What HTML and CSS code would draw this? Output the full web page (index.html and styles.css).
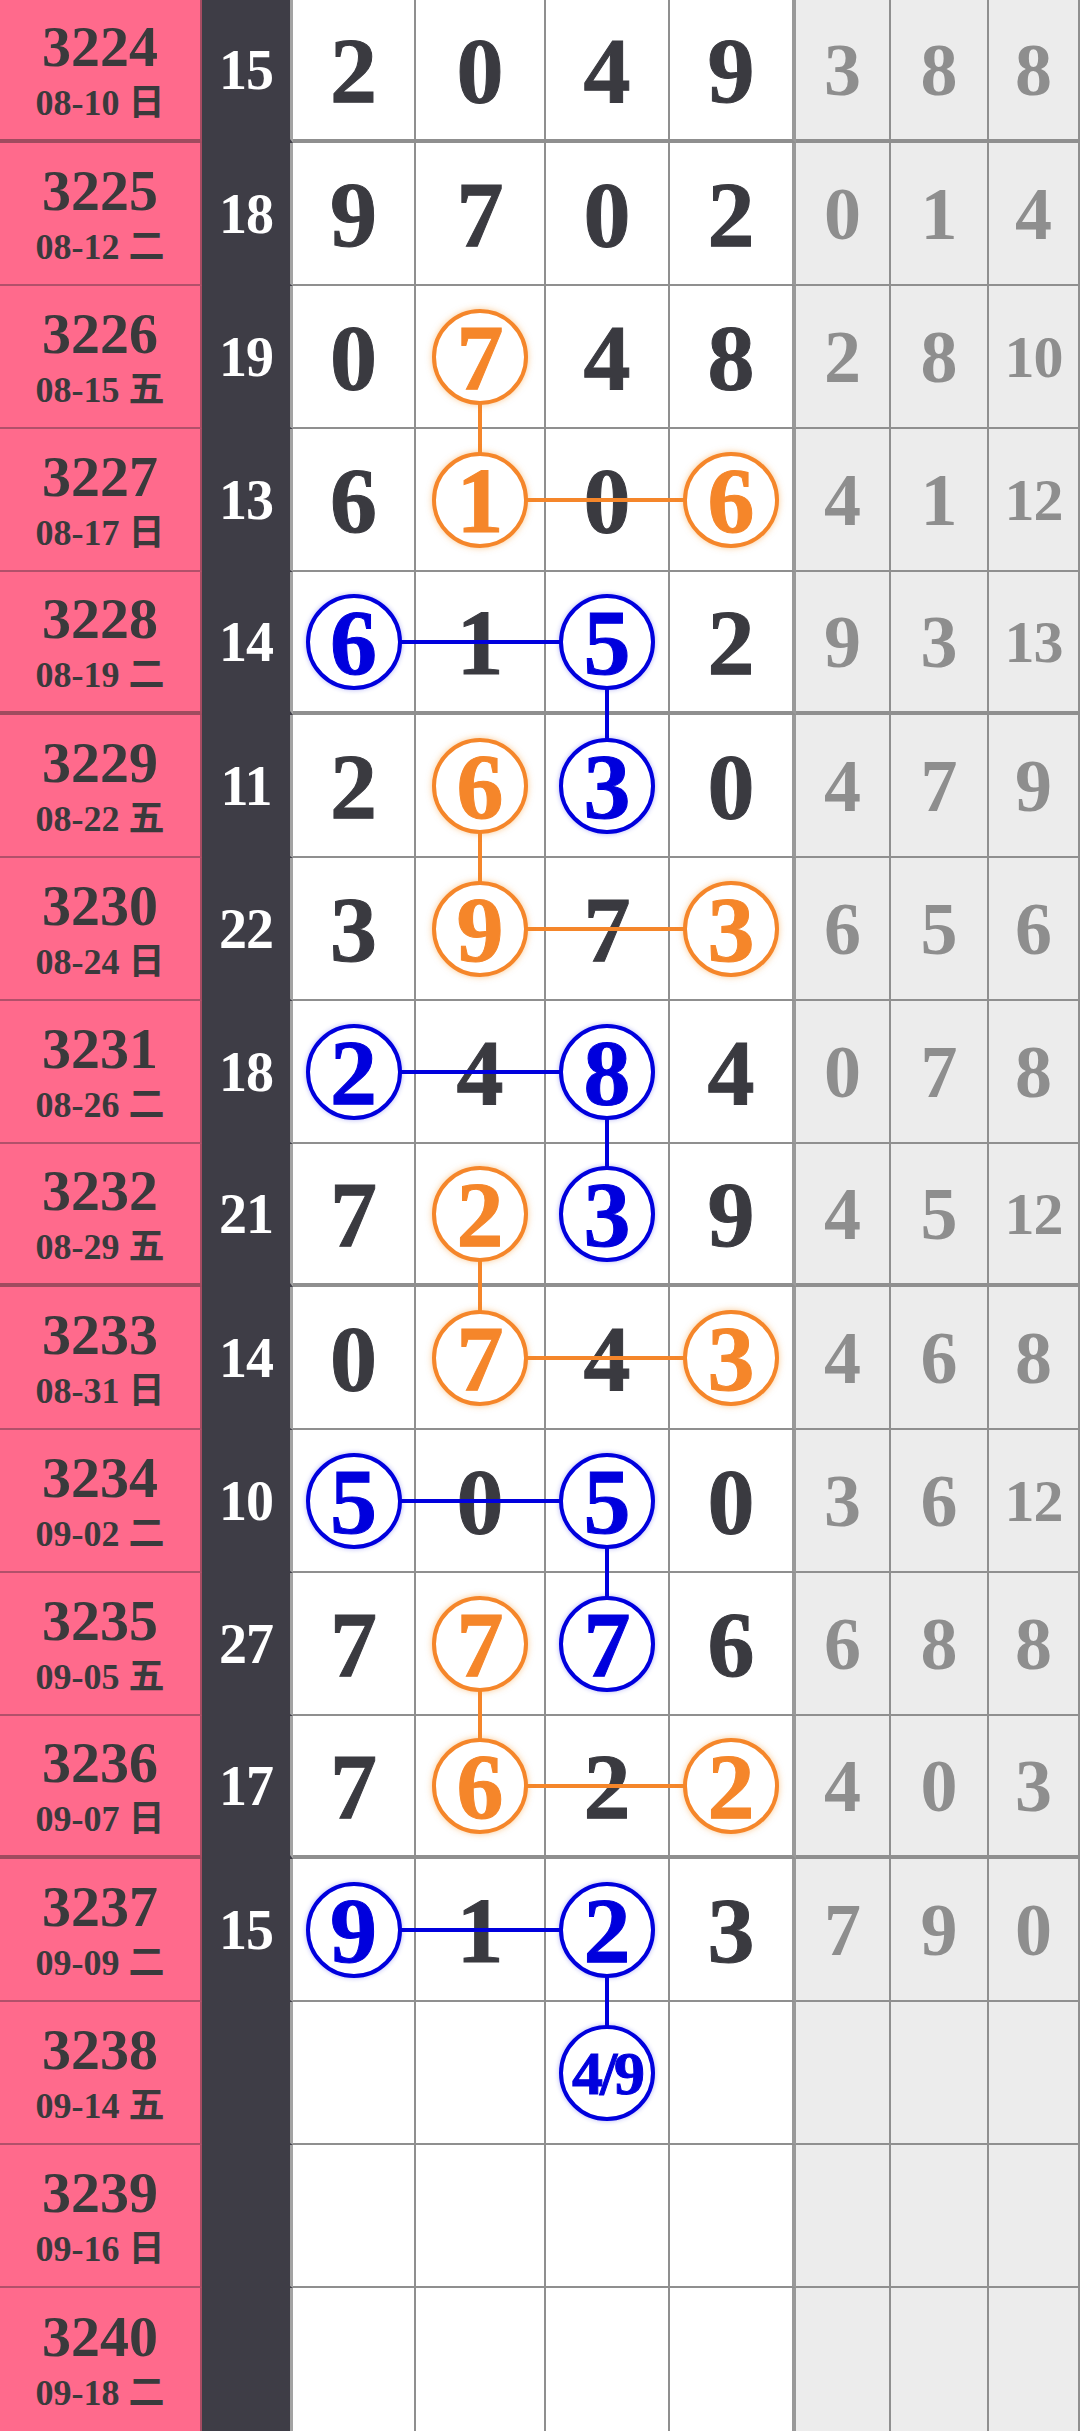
FILE: index.html
```html
<!DOCTYPE html>
<html lang="zh">
<head>
<meta charset="utf-8">
<title>走势图</title>
<link rel="stylesheet" href="styles.css">
</head>
<body>
<div class="board">
  <div class="row thick">
    <div class="issue"><div class="no">3224</div><div class="date">08-10 日</div></div>
    <div class="sum">15</div>
    <div class="d">2</div><div class="d">0</div><div class="d">4</div><div class="d d4">9</div>
    <div class="g">3</div><div class="g">8</div><div class="g">8</div>
  </div>
  <div class="row">
    <div class="issue"><div class="no">3225</div><div class="date">08-12 二</div></div>
    <div class="sum">18</div>
    <div class="d">9</div><div class="d">7</div><div class="d">0</div><div class="d d4">2</div>
    <div class="g">0</div><div class="g">1</div><div class="g">4</div>
  </div>
  <div class="row">
    <div class="issue"><div class="no">3226</div><div class="date">08-15 五</div></div>
    <div class="sum">19</div>
    <div class="d">0</div><div class="d lo vd"><span class="ring o">7</span></div><div class="d">4</div><div class="d d4">8</div>
    <div class="g">2</div><div class="g">8</div><div class="g sm">10</div>
  </div>
  <div class="row">
    <div class="issue"><div class="no">3227</div><div class="date">08-17 日</div></div>
    <div class="sum">13</div>
    <div class="d">6</div><div class="d lo vu hr"><span class="ring o">1</span></div><div class="d lo hf">0</div><div class="d d4 lo hl"><span class="ring o">6</span></div>
    <div class="g">4</div><div class="g">1</div><div class="g sm">12</div>
  </div>
  <div class="row thick">
    <div class="issue"><div class="no">3228</div><div class="date">08-19 二</div></div>
    <div class="sum">14</div>
    <div class="d lb hr"><span class="ring b">6</span></div><div class="d lb hf">1</div><div class="d lb hl vd"><span class="ring b">5</span></div><div class="d d4">2</div>
    <div class="g">9</div><div class="g">3</div><div class="g sm">13</div>
  </div>
  <div class="row">
    <div class="issue"><div class="no">3229</div><div class="date">08-22 五</div></div>
    <div class="sum">11</div>
    <div class="d">2</div><div class="d lo vd"><span class="ring o">6</span></div><div class="d lb vu"><span class="ring b">3</span></div><div class="d d4">0</div>
    <div class="g">4</div><div class="g">7</div><div class="g">9</div>
  </div>
  <div class="row">
    <div class="issue"><div class="no">3230</div><div class="date">08-24 日</div></div>
    <div class="sum">22</div>
    <div class="d">3</div><div class="d lo vu hr"><span class="ring o">9</span></div><div class="d lo hf">7</div><div class="d d4 lo hl"><span class="ring o">3</span></div>
    <div class="g">6</div><div class="g">5</div><div class="g">6</div>
  </div>
  <div class="row">
    <div class="issue"><div class="no">3231</div><div class="date">08-26 二</div></div>
    <div class="sum">18</div>
    <div class="d lb hr"><span class="ring b">2</span></div><div class="d lb hf">4</div><div class="d lb hl vd"><span class="ring b">8</span></div><div class="d d4">4</div>
    <div class="g">0</div><div class="g">7</div><div class="g">8</div>
  </div>
  <div class="row thick">
    <div class="issue"><div class="no">3232</div><div class="date">08-29 五</div></div>
    <div class="sum">21</div>
    <div class="d">7</div><div class="d lo vd"><span class="ring o">2</span></div><div class="d lb vu"><span class="ring b">3</span></div><div class="d d4">9</div>
    <div class="g">4</div><div class="g">5</div><div class="g sm">12</div>
  </div>
  <div class="row">
    <div class="issue"><div class="no">3233</div><div class="date">08-31 日</div></div>
    <div class="sum">14</div>
    <div class="d">0</div><div class="d lo vu hr"><span class="ring o">7</span></div><div class="d lo hf">4</div><div class="d d4 lo hl"><span class="ring o">3</span></div>
    <div class="g">4</div><div class="g">6</div><div class="g">8</div>
  </div>
  <div class="row">
    <div class="issue"><div class="no">3234</div><div class="date">09-02 二</div></div>
    <div class="sum">10</div>
    <div class="d lb hr"><span class="ring b">5</span></div><div class="d lb hf">0</div><div class="d lb hl vd"><span class="ring b">5</span></div><div class="d d4">0</div>
    <div class="g">3</div><div class="g">6</div><div class="g sm">12</div>
  </div>
  <div class="row">
    <div class="issue"><div class="no">3235</div><div class="date">09-05 五</div></div>
    <div class="sum">27</div>
    <div class="d">7</div><div class="d lo vd"><span class="ring o">7</span></div><div class="d lb vu"><span class="ring b">7</span></div><div class="d d4">6</div>
    <div class="g">6</div><div class="g">8</div><div class="g">8</div>
  </div>
  <div class="row thick">
    <div class="issue"><div class="no">3236</div><div class="date">09-07 日</div></div>
    <div class="sum">17</div>
    <div class="d">7</div><div class="d lo vu hr"><span class="ring o">6</span></div><div class="d lo hf">2</div><div class="d d4 lo hl"><span class="ring o">2</span></div>
    <div class="g">4</div><div class="g">0</div><div class="g">3</div>
  </div>
  <div class="row">
    <div class="issue"><div class="no">3237</div><div class="date">09-09 二</div></div>
    <div class="sum">15</div>
    <div class="d lb hr"><span class="ring b">9</span></div><div class="d lb hf">1</div><div class="d lb hl vd"><span class="ring b">2</span></div><div class="d d4">3</div>
    <div class="g">7</div><div class="g">9</div><div class="g">0</div>
  </div>
  <div class="row">
    <div class="issue"><div class="no">3238</div><div class="date">09-14 五</div></div>
    <div class="sum"></div>
    <div class="d"></div><div class="d"></div><div class="d lb vu"><span class="ring b pair">4/9</span></div><div class="d d4"></div>
    <div class="g"></div><div class="g"></div><div class="g"></div>
  </div>
  <div class="row">
    <div class="issue"><div class="no">3239</div><div class="date">09-16 日</div></div>
    <div class="sum"></div>
    <div class="d"></div><div class="d"></div><div class="d"></div><div class="d d4"></div>
    <div class="g"></div><div class="g"></div><div class="g"></div>
  </div>
  <div class="row last">
    <div class="issue"><div class="no">3240</div><div class="date">09-18 二</div></div>
    <div class="sum"></div>
    <div class="d"></div><div class="d"></div><div class="d"></div><div class="d d4"></div>
    <div class="g"></div><div class="g"></div><div class="g"></div>
  </div>
</div>
</body>
</html>
```

FILE: styles.css
```css
* {
  box-sizing: border-box;
  margin: 0;
  padding: 0;
}

html, body {
  width: 1080px;
  height: 2432px;
  overflow: hidden;
  background: #ffffff;
}

body {
  font-family: "Liberation Serif", "Noto Sans CJK SC", serif;
  font-weight: 700;
}

.board {
  display: flex;
  flex-direction: column;
}

.row {
  display: grid;
  grid-template-columns: 202px 91px 123px 130px 124px 126px 95px 98px 91px;
  height: 143px;
}

.row > div {
  position: relative;
  display: flex;
  align-items: center;
  justify-content: center;
  border-right: 2px solid #8f8f8f;
  border-bottom: 2px solid #8f8f8f;
  line-height: 1;
}

.row.thick > div {
  border-bottom-width: 4px;
}

.row.last > div {
  border-bottom-width: 0;
}

.row > .issue {
  flex-direction: column;
  gap: 9px;
  background: #ff6a8c;
  color: #3a3a3c;
  border-right-color: #a74c62;
  border-bottom-color: #b2506a;
}

.row.thick > .issue {
  border-bottom-color: #a04b5f;
}

.issue .no {
  font-size: 58px;
  line-height: 58px;
}

.issue .date {
  font-size: 36px;
  line-height: 36px;
  white-space: nowrap;
}

.row > .sum {
  background: #3e3d46;
  color: #ffffff;
  font-size: 56px;
  letter-spacing: -1px;
  border-right: 3px solid #a3a3a3;
  border-bottom-color: #3e3d46;
}

.row > .d {
  background: #ffffff;
  color: #3a3a40;
  font-size: 94px;
  -webkit-text-stroke: 1px currentColor;
}

.row > .d4 {
  border-right-width: 4px;
  border-right-color: #999999;
}

.row > .g {
  background: #ececec;
  color: #8e8e8e;
  font-size: 74px;
}

.row > .g.sm {
  font-size: 60px;
  letter-spacing: -1px;
}

/* connector lines */
.lo { --lc: #f5862a; }
.lb { --lc: #0000dd; }

.vu::before,
.vd::before,
.hl::after,
.hr::after,
.hf::after {
  content: "";
  position: absolute;
  z-index: 1;
  background: var(--lc);
}

.vd::before {
  left: calc(50% - 2px);
  width: 4px;
  top: 50%;
  bottom: -4px;
}

.vu::before {
  left: calc(50% - 2px);
  width: 4px;
  top: 0;
  bottom: 50%;
}

.hr::after {
  top: calc(50% - 2px);
  height: 4px;
  left: 50%;
  right: -2px;
}

.hl::after {
  top: calc(50% - 2px);
  height: 4px;
  left: 0;
  right: 50%;
}

.hf::after {
  top: calc(50% - 2px);
  height: 4px;
  left: 0;
  right: -2px;
}

/* circled numbers */
.ring {
  position: relative;
  z-index: 2;
  flex: none;
  display: flex;
  align-items: center;
  justify-content: center;
  width: 96px;
  height: 96px;
  border: 4px solid currentColor;
  border-radius: 50%;
  background: #ffffff;
  line-height: 1;
  -webkit-text-stroke: 1px currentColor;
}

.ring.o {
  color: #f5862a;
  box-shadow: 0 0 6px rgba(245, 150, 42, 0.5);
}

.ring.b {
  color: #0000dd;
  box-shadow: 0 0 5px rgba(0, 0, 221, 0.3);
}

.ring.pair {
  font-size: 62px;
  letter-spacing: -3px;
}
```
